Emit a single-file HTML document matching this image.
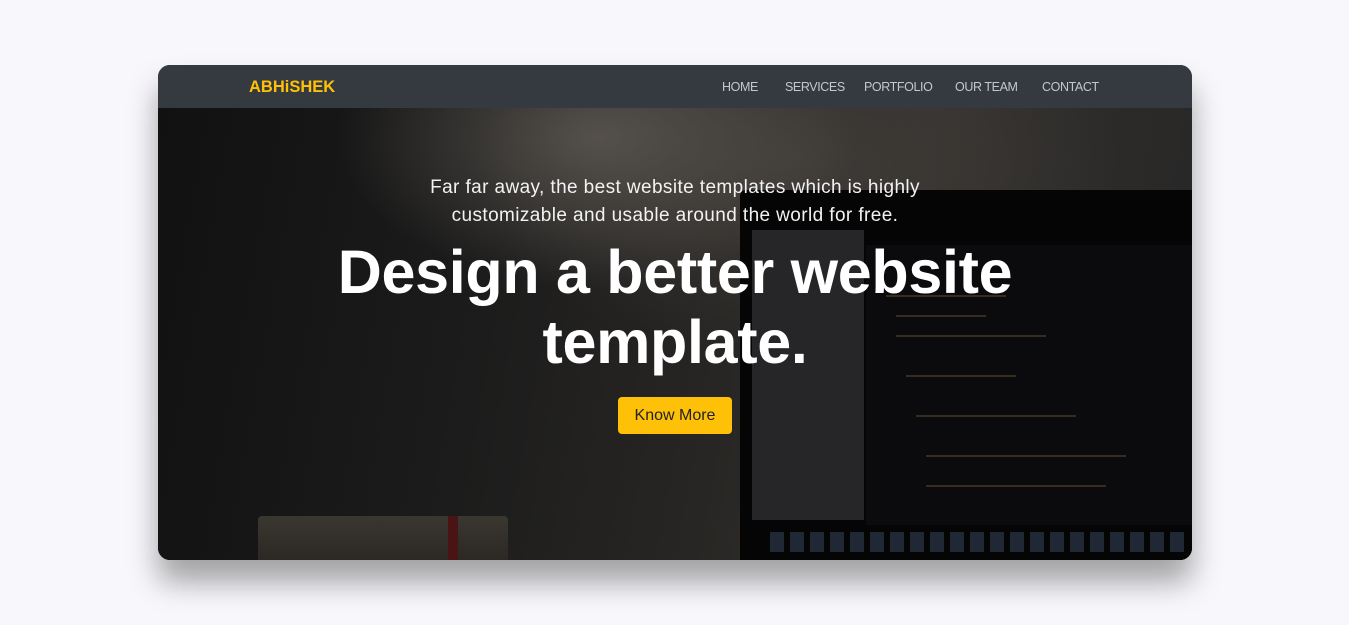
<!DOCTYPE html>
<html><head><style>
*{margin:0;padding:0;box-sizing:border-box}
body{width:1349px;height:625px;background:#f8f8fc;position:relative;overflow:hidden;font-family:"Liberation Sans",sans-serif}
.card{position:absolute;left:158px;top:65px;width:1034px;height:495px;border-radius:12px;overflow:hidden;background:#1a1a1a;box-shadow:0 22px 30px rgba(0,0,0,.35)}
.nav{position:absolute;left:0;top:0;width:100%;height:43px;background:#343a40;z-index:5}
.logo{position:absolute;left:91px;top:13px;color:#ffc107;font-weight:bold;font-size:16.5px}
.links{position:absolute;left:0;top:15px;color:#c4c8cc;font-size:12.5px;letter-spacing:-.4px}
.links span{position:absolute;white-space:nowrap}
.hero{position:absolute;left:0;top:43px;width:100%;height:452px;
background:
radial-gradient(ellipse 260px 150px at 440px 30px,rgba(95,90,84,.8),transparent),
radial-gradient(ellipse 320px 200px at 640px 50px,rgba(70,66,62,.7),transparent),
linear-gradient(100deg,#111 0%,#1b1b1b 30%,#282624 55%,#33302d 70%,#262626 100%)}
.laptop{position:absolute;left:582px;top:82px;width:460px;height:380px;background:#050505;border-radius:6px 0 0 0}
.tree{position:absolute;left:12px;top:40px;width:112px;height:290px;background:#262628}
.code{position:absolute;left:126px;top:55px;width:330px;height:280px;background:#0b0b0d}
.code i{position:absolute;height:2px;background:#4a3a2a;opacity:.7}
.dock{position:absolute;left:30px;top:342px;width:420px;height:20px;background:repeating-linear-gradient(90deg,#3a4a66 0 14px,transparent 14px 20px);opacity:.5}
.book{position:absolute;left:100px;top:408px;width:250px;height:50px;background:linear-gradient(#3a3630,#2a2722);border-radius:4px}
.book:after{content:"";position:absolute;left:190px;top:0;width:10px;height:50px;background:#4a1414}
.txt{position:absolute;left:0;width:100%;text-align:center;color:#fff;z-index:3}
.sub{top:66px;font-size:19px;line-height:28px;color:#f2f2f2;letter-spacing:.4px}
.h{top:129px;font-size:61px;font-weight:bold;line-height:70px;letter-spacing:-.3px}
.btn{position:absolute;left:460px;top:289px;width:114px;height:37px;background:#ffc107;border-radius:4px;color:#222;font-size:16px;text-align:center;line-height:37px;z-index:3}
</style></head><body>
<div class="card">
<div class="nav"><div class="logo">ABHiSHEK</div><div class="links"><span style="left:564px">HOME</span><span style="left:627px">SERVICES</span><span style="left:706px">PORTFOLIO</span><span style="left:797px">OUR TEAM</span><span style="left:884px">CONTACT</span></div></div>
<div class="hero">
<div class="laptop"><div class="tree"></div><div class="code">
<i style="left:20px;top:50px;width:120px"></i><i style="left:30px;top:70px;width:90px"></i><i style="left:30px;top:90px;width:150px"></i><i style="left:40px;top:130px;width:110px"></i><i style="left:50px;top:170px;width:160px"></i><i style="left:60px;top:210px;width:200px"></i><i style="left:60px;top:240px;width:180px"></i></div><div class="dock"></div></div>
<div class="book"></div>
<div class="txt sub">Far far away, the best website templates which is highly<br>customizable and usable around the world for free.</div>
<div class="txt h">Design a better website<br>template.</div>
<div class="btn">Know More</div>
</div>
</div>
</body></html>
